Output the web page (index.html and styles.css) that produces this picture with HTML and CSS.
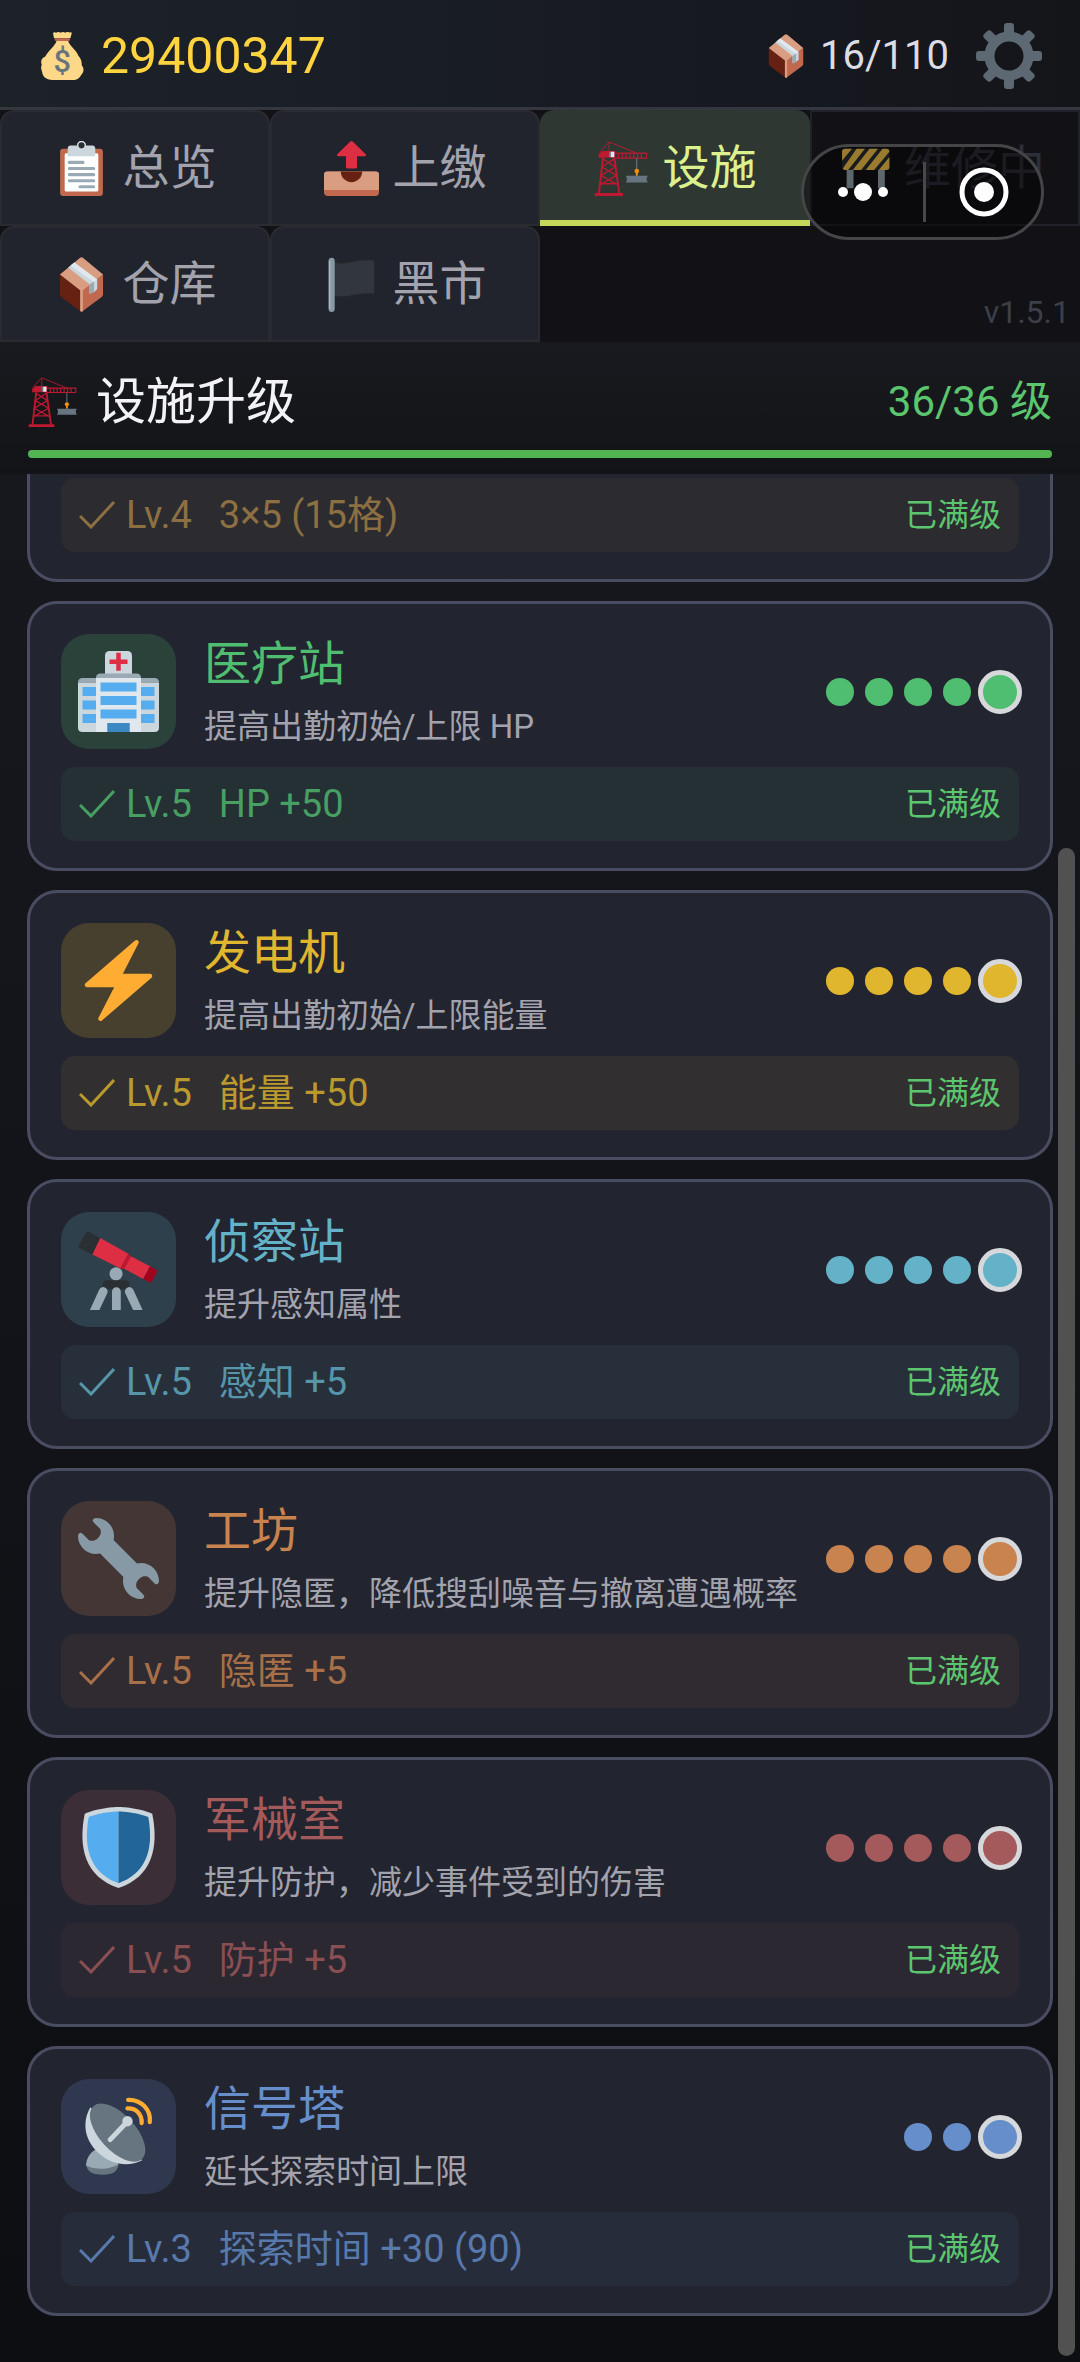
FILE: index.html
```html
<!DOCTYPE html>
<html lang="zh-CN">
<head>
<meta charset="utf-8">
<meta name="viewport" content="width=device-width, initial-scale=1">
<title>设施升级</title>
<link rel="stylesheet" href="styles.css">
</head>
<body>
<svg class="sprite" aria-hidden="true">
  <symbol id="i-box" viewBox="0 0 36 36">
    <path fill="#662113" d="M3.900 11.500L18 22V36L5 26.400Q3.900 25.600 3.900 24.500z"/>
    <path fill="#C1694F" d="M32.100 11.500L18 22V36L31 26.400Q32.100 25.600 32.100 24.500z"/>
    <path fill="#D99E82" d="M16.900.7Q18-.3 19.100.7L32.100 11.500 18.900 21.700V35.400L18 36 17.100 35.400V21.700L3.900 11.500z"/>
    <path fill="#CCD6DD" d="M9.300 6.900L13.300 3.600 28.300 14.700V21L26.500 22.800 23.300 24V17.900z"/>
    <path fill="#E1E8ED" d="M10.800 5.600L13.300 3.600 28.300 14.700 26 16.400z"/>
    <path fill="#99AAB5" d="M23.300 17.900L26.200 16V23L23.300 24z"/>
  </symbol>
  <symbol id="i-clip" viewBox="0 0 36 36">
    <rect x="4" y="5" width="28" height="31" rx="2" fill="#C1694F"/>
    <rect x="7" y="8" width="22" height="25" rx="1" fill="#fff"/>
    <path fill="#CCD6DD" d="M11 3H15A3 3 0 0 1 21 3H25Q27 3 27 5V10H9V5Q9 3 11 3z"/>
    <circle cx="18" cy="2.800" r="2.400" fill="#292F33" stroke="#E1E8ED" stroke-width=".7"/>
    <path stroke="#99AAB5" stroke-width="2" stroke-linecap="round" d="M10 14H19M10 18H26M10 22H26M10 26H26M17 30H26"/>
  </symbol>
  <symbol id="i-out" viewBox="0 0 36 36">
    <rect y="20" width="36" height="16" rx="2.500" fill="#C1694F"/>
    <path fill="#D99E82" d="M0 32V22Q0 20 2 20H34Q36 20 36 22V32z"/>
    <path fill="#662113" d="M11 20H25A7 7 0 0 1 11 20z"/>
    <path fill="#DD2E44" d="M17.200.4Q18-.3 18.800.4L27.300 8.700Q28 10 26.500 10H21.600V17Q21.600 18 20.600 18H15.400Q14.400 18 14.400 17V10H9.500Q8 10 8.700 8.700z"/>
  </symbol>
  <symbol id="i-flag" viewBox="0 0 36 36">
    <path fill="#31373D" stroke="#24292e" stroke-width=".4" d="M6 3C14 6.500 21 .5 32 2.200Q33 2.400 33 3.200V23.500Q33 24.300 32 24.200C22 22.500 15 28 6 25z"/>
    <rect x="3" y=".5" width="4" height="35.500" rx="2" fill="#8899A6"/>
    <path stroke="#AAB8C2" d="M3.700 2.500V34"/>
  </symbol>
  <symbol id="i-crane" viewBox="0 0 36 36">
    <g fill="none" stroke="#BE1931">
      <path stroke-width=".6" d="M3.500 7.500L9.900.6 28 8M9.900.6V8"/>
      <path stroke-width="1.300" d="M5.900 11L3.200 34.500M13.300 11L16.600 34.500"/>
      <path stroke-width=".9" d="M5.700 11.500L14 17M13.400 11.500L5.200 17 14.800 22.500M14 17L4.500 22.500 15.400 28.500M14.800 22.500L4 28.500M4.500 28H15.500"/>
      <path stroke-width=".8" d="M13.500 8H34.400V11.200H13.500M16 8V11M18.500 8V11M21 8V11M23.500 8V11M26 8V11M28.500 8V11M31 8V11"/>
    </g>
    <path fill="#BE1931" d="M.5 34H19V36H.5zM3 8.500L5.500 6.500H13.800V11H3z"/>
    <path fill="#66757F" d="M9.800 7H11.500V10.600H9.800z"/>
    <path fill="#E1E8ED" d="M11 7H13.300V10.600H11z"/>
    <path stroke="#8899A6" stroke-width=".5" d="M28 11.500V19"/>
    <circle cx="28" cy="19.600" r="1.500" fill="#F4900C"/>
    <path stroke="#F4900C" stroke-width="1.300" d="M28 20V22.800"/>
    <path fill="#66757F" d="M21 22.800H35V23.800H34.500V26.200H35V27.200H21V26.200H21.500V23.800H21z"/>
  </symbol>
  <symbol id="i-barrier" viewBox="0 0 36 36">
    <path fill="#99AAB5" d="M5 17H9.500V31H5zM25.500 17H30V31H25.500z"/>
    <rect x="2" y="5" width="31" height="14" rx="2" fill="#292F33"/>
    <path fill="#FFCC4D" d="M2 13V7Q2 5 4 5H8.500zM11.500 5H17L6 19H4Q3 19 2.500 18zM20 5H25.500L14.500 19H9zM28.500 5H31Q33 5 33 7L23 19H17.500zM33 10.500V17Q33 19 31 19H26z"/>
  </symbol>
  <symbol id="i-gear" viewBox="0 0 66 66">
    <circle cx="33" cy="33" r="19.500" fill="none" stroke="#5C6973" stroke-width="10"/>
    <g fill="#5C6973">
      <path id="tooth" d="M28 14V3Q28 0 31 0H35Q38 0 38 3V14z"/>
      <use href="#tooth" transform="rotate(45 33 33)"/>
      <use href="#tooth" transform="rotate(90 33 33)"/>
      <use href="#tooth" transform="rotate(135 33 33)"/>
      <use href="#tooth" transform="rotate(180 33 33)"/>
      <use href="#tooth" transform="rotate(225 33 33)"/>
      <use href="#tooth" transform="rotate(270 33 33)"/>
      <use href="#tooth" transform="rotate(315 33 33)"/>
    </g>
  </symbol>
  <symbol id="i-check" viewBox="0 0 36 28">
    <path fill="none" stroke="currentColor" stroke-width="3" d="M1 15L12 26 35 1"/>
  </symbol>
  <symbol id="i-hospital" viewBox="0 0 36 36">
    <rect x="12" width="12" height="14" rx="2" fill="#CCD6DD"/>
    <path fill="#DD2E44" d="M17 .8H19V3.800H22V5.800H19V8.800H17V5.800H14V3.800H17z"/>
    <path fill="#99AAB5" d="M0 14Q0 12 2 12H34Q36 12 36 14z"/>
    <path fill="#CCD6DD" d="M0 14H36V34Q36 36 34 36H2Q0 36 0 34z"/>
    <path fill="#99AAB5" d="M8 12Q8 10 10 10H26Q28 10 28 12z"/>
    <path fill="#E1E8ED" d="M8 12H28V36H8z"/>
    <path fill="#55ACEE" d="M10 14H26V18H10zM10 20H26V24H10zM10 26H26V30H10zM2 16H8V20H2zM2 22H8V26H2zM2 28H8V32H2zM28 16H34V20H28zM28 22H34V26H28zM28 28H34V32H28z"/>
    <path fill="#3B88C3" d="M13 32H23V36H13z"/>
  </symbol>
  <symbol id="i-bolt" viewBox="0 0 36 36">
    <path fill="#FFAC33" d="M32.938 15.651C32.792 15.260 32.418 15 32 15H19.925L26.890 1.458c.219-.426.106-.947-.271-1.243C26.437.071 26.218 0 26 0c-.233 0-.466.082-.653.243L18 6.588 3.347 19.243c-.316.273-.430.714-.284 1.105S3.582 21 4 21h12.075L9.110 34.542c-.219.426-.106.947.271 1.243.182.144.401.215.619.215.233 0 .466-.082.653-.243L18 29.412l14.653-12.655c.317-.273.430-.714.285-1.106z"/>
  </symbol>
  <symbol id="i-scope" viewBox="0 0 36 36">
    <path fill="#292F33" d="M3.600 1.600Q4.200.9 5 1.300L9.900 4 6.400 11.300.8 8.500Q0 8 .4 7.400z"/>
    <rect x="10.800" y="22.800" width="12.200" height="4" rx="2" fill="#292F33"/>
    <path fill="#DD2E44" d="M9.900 4L22.400 11 18.900 17.600 6.400 11.300zM23.500 12.100L32 16.600 29 22.200 20.400 17.600z"/>
    <path fill="#BE1931" d="M22.400 11L23.500 12.300 20.400 17.900 18.700 17.400z"/>
    <path fill="#A0041E" d="M32 16.600L35.400 18.500 32.500 24.100 29 22.200z"/>
    <circle cx="16.900" cy="19.900" r="2.900" fill="#99AAB5"/>
    <path fill="#99AAB5" d="M15.100 36V27.800A1.900 1.900 0 0 1 19 27.800V36zM5.300 36L9.400 27A1.900 1.900 0 0 1 13 28.500L9.500 36zM28.700 36L24.600 27A1.900 1.900 0 0 0 21 28.500L24.500 36z"/>
  </symbol>
  <symbol id="i-wrench" viewBox="0 0 36 36">
    <path fill="#8899A6" d="M27.989 19.977c-.622 0-1.225.078-1.806.213L15.811 9.818c.134-.581.212-1.184.212-1.806C16.023 3.587 12.436 0 8.012 0 7.110 0 5.910.916 6.909 1.915l2.997 2.997s.999 1.998-.999 3.995-3.996.998-3.996.998L1.915 6.908C.916 5.909 0 7.105 0 8.012c0 4.425 3.587 8.012 8.012 8.012.622 0 1.225-.078 1.806-.212l10.371 10.371c-.135.581-.213 1.184-.213 1.806 0 4.425 3.588 8.011 8.012 8.011.901 0 2.101-.916 1.102-1.915l-2.997-2.997s-.999-1.998.999-3.995 3.995-.999 3.995-.999l2.997 2.997c1 .999 1.916-.197 1.916-1.104 0-4.423-3.587-8.010-8.011-8.010z"/>
  </symbol>
  <symbol id="i-shield" viewBox="0 0 36 36">
    <path fill="#CCD6DD" d="M33 3c-7-3-15-3-15-3S10 0 3 3C0 18 3 31 18 36c15-5 18-18 15-33z"/>
    <path fill="#55ACEE" d="M18 33.884C6.412 29.729 1.961 19.831 4.760 4.444 11.063 2.029 17.928 2 18 2z"/>
    <path fill="#269" d="M31.240 4.444C24.958 2.040 18.071 2 18 2v31.884c11.588-4.155 16.039-14.053 13.240-29.440z"/>
  </symbol>
  <symbol id="i-dish" viewBox="0 0 36 36">
    <path fill="#66757F" d="M3.600 30Q3.600 35 11 35 18 35 18 30z"/>
    <path fill="#99AAB5" d="M8 23.500C5 25.500 3.600 28 3.600 31Q10 34 18 30.500L16 27z"/>
    <path fill="#CCD6DD" d="M5.500 5C1.500 12 3 20 9.500 25.700 15.500 31 23 31.500 28.500 28.500z"/>
    <ellipse cx="17.600" cy="16.300" rx="16" ry="8" transform="rotate(47.500 17.600 16.300)" fill="#66757F"/>
    <path stroke="#CCD6DD" stroke-width="2.200" stroke-linecap="round" d="M14.300 19.400L22 11.300"/>
    <circle cx="22" cy="11.200" r="2.300" fill="#CCD6DD"/>
    <path fill="none" stroke="#FFAC33" stroke-width="1.900" stroke-linecap="round" d="M22.300 1.700C28 1.500 32.500 6 31.900 11.600M22 5.500C25.800 5.300 28.500 8 28.300 12"/>
  </symbol>
</svg>

<header class="topbar">
  <div class="coins">
    <svg class="ic-48" viewBox="0 0 36 36">
      <path fill="#FDD888" d="M12 4.600L11.300 1.200C11.500.2 12.600-.2 13.600.6 14.600-.2 16-.2 17 .6 18-.2 19.400-.2 20.400.6 21.500-.2 22.800-.3 23.800.5 25-.2 25.400.600 25.200 1.300L24.300 4.600zM14 6.500C12.500 11 8 13.500 5.500 18.300 2.500 19.500 1.800 22 2.800 24.500 1.500 28 3.300 29 3.300 31 4 34.500 7.500 36 10.500 36H26.500C30 36 31.500 33.800 32.500 32 35 29.500 34.200 26.500 32.800 25.200 33 22 32.200 20.200 30.300 17.800 28.800 13.200 24 11 22.500 6.500z"/>
      <rect x="12.500" y="4.600" width="11.500" height="2.100" rx="1" fill="#BF6952"/>
      <text class="coin-sign" x="18.200" y="30" text-anchor="middle">$</text>
    </svg>
    <span>29400347</span>
  </div>
  <div class="stock"><svg class="ic-44"><use href="#i-box"/></svg><span>16/110</span></div>
  <button class="settings" type="button" aria-label="设置"><svg class="ic-66"><use href="#i-gear"/></svg></button>
</header>

<nav class="tabs">
  <button class="tab" type="button"><svg class="ic-55"><use href="#i-clip"/></svg>总览</button>
  <button class="tab" type="button"><svg class="ic-55"><use href="#i-out"/></svg>上缴</button>
  <button class="tab tab--active" type="button" aria-current="page"><svg class="ic-55"><use href="#i-crane"/></svg>设施</button>
  <button class="tab tab--off" type="button"><svg class="ic-55"><use href="#i-barrier"/></svg>维修中</button>
  <button class="tab" type="button"><svg class="ic-55"><use href="#i-box"/></svg>仓库</button>
  <button class="tab" type="button"><svg class="ic-55"><use href="#i-flag"/></svg>黑市</button>
  <span class="version">v1.5.1</span>
  <div class="capsule">
    <button type="button" class="capsule-btn" aria-label="更多"><svg class="capsule-more" viewBox="0 0 52 20"><circle cx="6" cy="10" r="5"/><circle cx="26" cy="10" r="9"/><circle cx="46" cy="10" r="5"/></svg></button>
    <button type="button" class="capsule-btn" aria-label="关闭"><svg class="capsule-close" viewBox="0 0 50 50"><circle cx="25" cy="25" r="22" fill="none" stroke="#fff" stroke-width="5"/><circle cx="25" cy="25" r="10"/></svg></button>
  </div>
</nav>

<section class="summary">
  <div class="summary-row">
    <svg class="ic-50"><use href="#i-crane"/></svg>
    <h1>设施升级</h1>
    <span class="summary-level">36/36 级</span>
  </div>
  <div class="bar" role="progressbar" aria-valuemin="0" aria-valuemax="36" aria-valuenow="36" aria-label="设施等级"><div class="bar-fill" style="width:100%"></div></div>
</section>

<main class="list">
  <article class="card card--cut c-storage">
    <div class="effect"><svg class="check"><use href="#i-check"/></svg><span class="lv">Lv.4</span><span>3×5 (15格)</span><span class="max">已满级</span></div>
  </article>

  <article class="card c-medical">
    <div class="head">
      <div class="tile"><svg class="ic-81"><use href="#i-hospital"/></svg></div>
      <div class="info"><h2>医疗站</h2><p>提高出勤初始/上限 HP</p></div>
      <div class="dots"><i></i><i></i><i></i><i></i><i class="now"></i></div>
    </div>
    <div class="effect"><svg class="check"><use href="#i-check"/></svg><span class="lv">Lv.5</span><span>HP +50</span><span class="max">已满级</span></div>
  </article>

  <article class="card c-power">
    <div class="head">
      <div class="tile"><svg class="ic-81"><use href="#i-bolt"/></svg></div>
      <div class="info"><h2>发电机</h2><p>提高出勤初始/上限能量</p></div>
      <div class="dots"><i></i><i></i><i></i><i></i><i class="now"></i></div>
    </div>
    <div class="effect"><svg class="check"><use href="#i-check"/></svg><span class="lv">Lv.5</span><span>能量 +50</span><span class="max">已满级</span></div>
  </article>

  <article class="card c-scout">
    <div class="head">
      <div class="tile"><svg class="ic-81"><use href="#i-scope"/></svg></div>
      <div class="info"><h2>侦察站</h2><p>提升感知属性</p></div>
      <div class="dots"><i></i><i></i><i></i><i></i><i class="now"></i></div>
    </div>
    <div class="effect"><svg class="check"><use href="#i-check"/></svg><span class="lv">Lv.5</span><span>感知 +5</span><span class="max">已满级</span></div>
  </article>

  <article class="card c-workshop">
    <div class="head">
      <div class="tile"><svg class="ic-81"><use href="#i-wrench"/></svg></div>
      <div class="info"><h2>工坊</h2><p>提升隐匿，降低搜刮噪音与撤离遭遇概率</p></div>
      <div class="dots"><i></i><i></i><i></i><i></i><i class="now"></i></div>
    </div>
    <div class="effect"><svg class="check"><use href="#i-check"/></svg><span class="lv">Lv.5</span><span>隐匿 +5</span><span class="max">已满级</span></div>
  </article>

  <article class="card c-armory">
    <div class="head">
      <div class="tile"><svg class="ic-81"><use href="#i-shield"/></svg></div>
      <div class="info"><h2>军械室</h2><p>提升防护，减少事件受到的伤害</p></div>
      <div class="dots"><i></i><i></i><i></i><i></i><i class="now"></i></div>
    </div>
    <div class="effect"><svg class="check"><use href="#i-check"/></svg><span class="lv">Lv.5</span><span>防护 +5</span><span class="max">已满级</span></div>
  </article>

  <article class="card c-signal">
    <div class="head">
      <div class="tile"><svg class="ic-81"><use href="#i-dish"/></svg></div>
      <div class="info"><h2>信号塔</h2><p>延长探索时间上限</p></div>
      <div class="dots"><i></i><i></i><i class="now"></i></div>
    </div>
    <div class="effect"><svg class="check"><use href="#i-check"/></svg><span class="lv">Lv.3</span><span>探索时间 +30 (90)</span><span class="max">已满级</span></div>
  </article>

  <div class="scrollbar"></div>
</main>
</body>
</html>
```
FILE: styles.css
```css
* {
  box-sizing: border-box;
}

body {
  margin: 0;
  min-height: 100vh;
  display: flex;
  flex-direction: column;
  background: #111116;
  color: #f2f2f7;
  font-family: Roboto, "Noto Sans CJK SC", sans-serif;
}

h1, h2, p {
  margin: 0;
  font-weight: 400;
}

button {
  margin: 0;
  padding: 0;
  border: 0;
  background: none;
  color: inherit;
  font: inherit;
}

svg {
  display: block;
  flex: none;
}

.sprite {
  position: absolute;
  width: 0;
  height: 0;
}

.ic-44 { width: 44px; height: 44px; }
.ic-48 { width: 48px; height: 48px; }
.ic-50 { width: 50px; height: 50px; }
.ic-55 { width: 55px; height: 55px; }
.ic-66 { width: 66px; height: 66px; }
.ic-81 { width: 81px; height: 81px; }

/* top bar */
.topbar {
  display: flex;
  align-items: center;
  height: 110px;
  padding: 4px 38px 0;
  border-bottom: 3px solid #34373f;
  background: linear-gradient(90deg, #1d2229, #171a23 60%, #141519);
}

.coins,
.stock {
  display: flex;
  align-items: center;
}

.coins {
  gap: 15px;
  color: #ffd43f;
  font-size: 50px;
  line-height: 60px;
}

.coin-sign {
  fill: #67757f;
  font-size: 23px;
  font-weight: 500;
}

.stock {
  gap: 12px;
  margin-left: auto;
  color: #dcdce2;
  font-size: 40px;
  line-height: 60px;
}

.settings {
  margin-left: 27px;
}

/* tabs */
.tabs {
  position: relative;
  display: grid;
  grid-template-columns: repeat(4, 1fr);
  grid-auto-rows: 116px;
  background: #111116;
}

.tab {
  display: flex;
  align-items: center;
  justify-content: center;
  gap: 14px;
  border: 2px solid #292b31;
  border-radius: 14px 14px 0 0;
  background: #21242c;
  color: #a3a3ae;
  font-size: 47px;
  line-height: 60px;
}

.tab--active {
  padding-top: 6px;
  border: 0;
  border-bottom: 6px solid #c6d85c;
  background: #2e3732;
  color: #dcf08e;
}

.tab--off {
  gap: 10px;
  padding-right: 6px;
  border-color: #20212a;
  border-radius: 0;
  background: #111116;
  color: #2e2e38;
}

.version {
  grid-column: span 2;
  align-self: end;
  padding: 0 10px 11px 0;
  color: #3c3f48;
  font-size: 32px;
  line-height: 38px;
  text-align: right;
}

/* floating pill over the tab bar */
.capsule {
  position: absolute;
  top: 34px;
  right: 36px;
  display: flex;
  width: 243px;
  height: 96px;
  border: 3px solid #454547;
  border-radius: 48px;
  background: rgba(0, 0, 0, .4);
}

.capsule-btn {
  display: flex;
  flex: 1;
  align-items: center;
  justify-content: center;
}

.capsule-btn + .capsule-btn {
  justify-content: flex-start;
}

.capsule-btn + .capsule-btn::before {
  content: "";
  flex: none;
  width: 3px;
  height: 60px;
  margin-right: 33px;
  background: #48484a;
}

.capsule-more {
  width: 52px;
  height: 20px;
  fill: #fff;
}

.capsule-close {
  width: 50px;
  height: 50px;
  fill: #fff;
}

/* section header */
.summary {
  padding: 30px 28px 16px;
  background: linear-gradient(#191a1f, #121417);
}

.summary-row {
  display: flex;
  align-items: center;
  gap: 18px;
  margin-bottom: 18px;
}

.summary h1 {
  font-size: 50px;
  line-height: 60px;
}

.summary-level {
  margin-left: auto;
  color: #5bc66e;
  font-size: 42px;
  line-height: 60px;
}

.bar {
  height: 8px;
  border-radius: 4px;
  background: #2a2c33;
}

.bar-fill {
  height: 100%;
  border-radius: 4px;
  background: #52b552;
}

/* facility list */
.list {
  position: relative;
  flex: 1;
  display: flex;
  flex-direction: column;
  gap: 19px;
  padding: 0 27px 40px;
  background: linear-gradient(#17181d, #0d0e12);
}

.card {
  padding: 30px 31px 27px;
  border: 3px solid #4a4d61;
  border-radius: 30px;
  background: #22242f;
}

.card--cut {
  padding-top: 4px;
  border-top: 0;
  border-radius: 0 0 30px 30px;
}

.c-storage { --c: #a78345; }
.c-medical { --c: #50be70; }
.c-power { --c: #e0b62f; }
.c-scout { --c: #64b2c8; }
.c-workshop { --c: #c8834e; }
.c-armory { --c: #a45a5b; }
.c-signal { --c: #668ecb; }

.head {
  display: flex;
  align-items: center;
  margin-bottom: 18px;
}

.tile {
  display: flex;
  flex: none;
  align-items: center;
  justify-content: center;
  width: 115px;
  height: 115px;
  border-radius: 28px;
  background: color-mix(in srgb, var(--c) 20%, transparent);
}

.info {
  margin-left: 28px;
  white-space: nowrap;
}

.info h2 {
  margin-bottom: 11px;
  color: var(--c);
  font-size: 47px;
  line-height: 60px;
}

.info p {
  color: #a3a3ae;
  font-size: 33px;
  line-height: 44px;
}

.dots {
  display: flex;
  align-items: center;
  gap: 11px;
  margin-left: auto;
}

.dots i {
  width: 28px;
  height: 28px;
  border-radius: 50%;
  background: var(--c);
}

.dots .now {
  width: 44px;
  height: 44px;
  margin: 0 -3px 0 -4px;
  border: 5px solid #d6d8dc;
}

.effect {
  display: flex;
  align-items: center;
  height: 74px;
  padding: 0 18px;
  border-radius: 14px;
  background: color-mix(in srgb, var(--c) 8%, transparent);
  color: color-mix(in srgb, var(--c) 80%, #22242f);
  font-size: 38px;
  line-height: 48px;
}

.check {
  width: 36px;
  height: 28px;
}

.lv {
  margin: 0 27px 0 11px;
}

.max {
  margin-left: auto;
  color: #5bc66e;
  font-size: 32px;
}

.scrollbar {
  position: absolute;
  top: 374px;
  right: 5px;
  bottom: 6px;
  width: 17px;
  border-radius: 9px;
  background: #515152;
}
```
